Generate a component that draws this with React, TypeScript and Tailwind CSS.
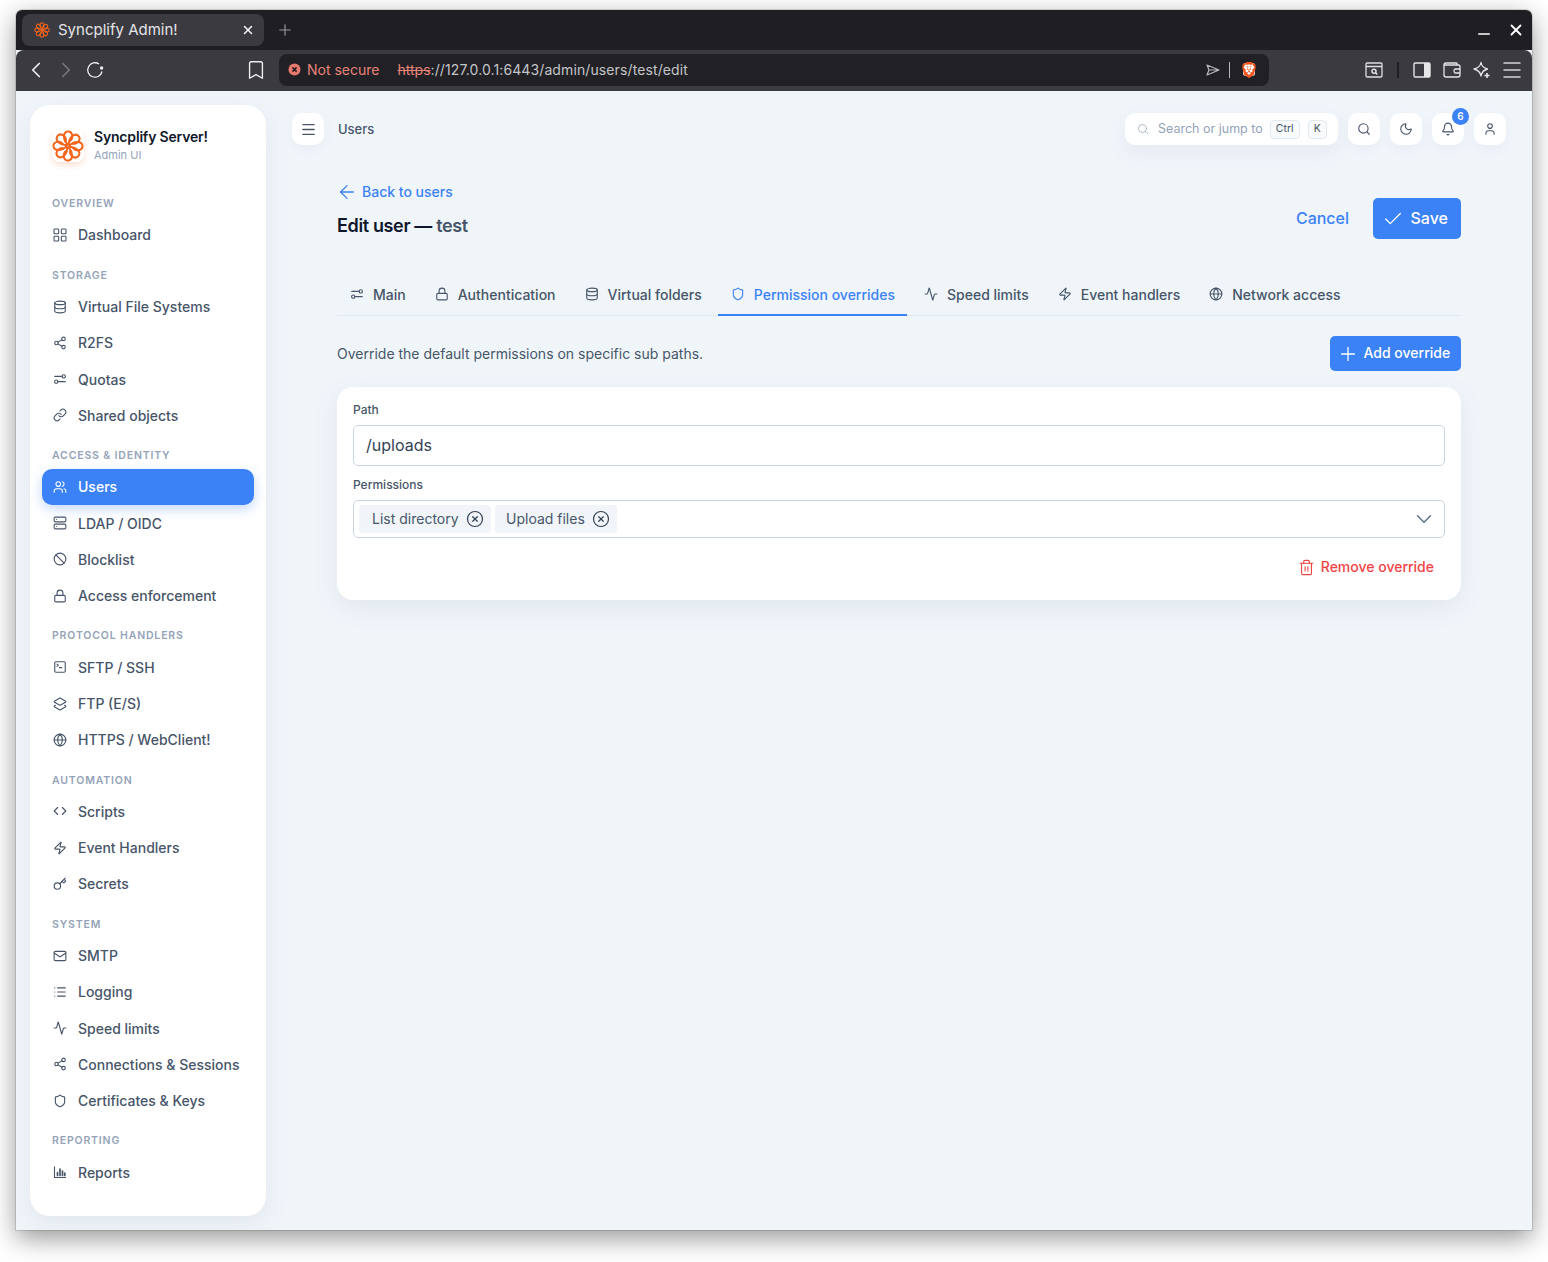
import React from "react";
import { SiBrave } from "react-icons/si";
import {
  Activity, ArrowLeft, Ban, Bell, Bookmark, Check, ChevronDown, ChevronLeft, ChevronRight, CircleX, Code, Database, Globe, Key, Layers2, LayoutGrid, Link, List, Lock, Mail, Menu, Minus, Moon, Plus, Search, Server, Share2, Shield, SquareTerminal, Trash2, User, Users, X, Zap,
} from "lucide-react";

function Flower({ size, stroke = 2 }: { size: number; stroke?: number }) {
  const angles = [0, 45, 90, 135, 180, 225, 270, 315];
  return (
    <svg width={size} height={size} viewBox="0 0 32 32" fill="none" stroke="#f4641c" strokeWidth={stroke}>
      {angles.map((a) => (
        <path key={a} transform={`rotate(${a} 16 16)`} d="M16 14.5 C11 11 10.5 2.5 15.5 1.5 C21 1 21.5 8.5 18 11" strokeLinecap="round" />
      ))}
    </svg>
  );
}

function ReportsIcon({ size }: { size: number; strokeWidth?: number }) {
  return (
    <svg width={size} height={size} viewBox="0 0 14 14" fill="none" stroke="currentColor">
      <path d="M1.5 1.5 V12.5 H13" strokeWidth="1.1" />
      <path d="M4.5 10.5 V7.5 M7 10.5 V4 M9.5 10.5 V6 M11.8 10.5 V8" strokeWidth="1.7" strokeLinecap="round" />
    </svg>
  );
}

function SlidersIcon({ size, strokeWidth = 2, className }: { size: number; strokeWidth?: number; className?: string }) {
  return (
    <svg width={size} height={size} viewBox="0 0 24 24" fill="none" stroke="currentColor" strokeWidth={strokeWidth} strokeLinecap="round" className={className}>
      <path d="M3 7.5 H15.5" />
      <circle cx="18.5" cy="7.5" r="2.8" />
      <circle cx="5.5" cy="16.5" r="2.8" />
      <path d="M8.5 16.5 H21" />
    </svg>
  );
}

function GridIcon({ size, strokeWidth }: { size: number; strokeWidth?: number }) {
  return <LayoutGrid size={size + 2} strokeWidth={(strokeWidth ?? 2) * 0.85} className="-mx-px" />;
}

const sections: { title: string; items: { label: string; icon: React.ElementType; active?: boolean }[] }[] = [
  { title: "OVERVIEW", items: [{ label: "Dashboard", icon: GridIcon }] },
  {
    title: "STORAGE",
    items: [
      { label: "Virtual File Systems", icon: Database },
      { label: "R2FS", icon: Share2 },
      { label: "Quotas", icon: SlidersIcon },
      { label: "Shared objects", icon: Link },
    ],
  },
  {
    title: "ACCESS & IDENTITY",
    items: [
      { label: "Users", icon: Users, active: true },
      { label: "LDAP / OIDC", icon: Server },
      { label: "Blocklist", icon: Ban },
      { label: "Access enforcement", icon: Lock },
    ],
  },
  {
    title: "PROTOCOL HANDLERS",
    items: [
      { label: "SFTP / SSH", icon: SquareTerminal },
      { label: "FTP (E/S)", icon: Layers2 },
      { label: "HTTPS / WebClient!", icon: Globe },
    ],
  },
  {
    title: "AUTOMATION",
    items: [
      { label: "Scripts", icon: Code },
      { label: "Event Handlers", icon: Zap },
      { label: "Secrets", icon: Key },
    ],
  },
  {
    title: "SYSTEM",
    items: [
      { label: "SMTP", icon: Mail },
      { label: "Logging", icon: List },
      { label: "Speed limits", icon: Activity },
      { label: "Connections & Sessions", icon: Share2 },
      { label: "Certificates & Keys", icon: Shield },
    ],
  },
  { title: "REPORTING", items: [{ label: "Reports", icon: ReportsIcon }] },
];

const tabs: { label: string; icon: React.ElementType; active?: boolean }[] = [
  { label: "Main", icon: SlidersIcon },
  { label: "Authentication", icon: Lock },
  { label: "Virtual folders", icon: Database },
  { label: "Permission overrides", icon: Shield, active: true },
  { label: "Speed limits", icon: Activity },
  { label: "Event handlers", icon: Zap },
  { label: "Network access", icon: Globe },
];

function BrowserChrome() {
  return (
    <>
      <div className="h-[40px] bg-[#1f1f23] flex items-center pl-[6px] pr-[6px] text-[#e4e4e7]">
        <div className="w-[242px] h-[32px] bg-[#3a3a40] rounded-[8px] flex items-center pl-[12px] pr-[9px]">
          <Flower size={16} stroke={2.2} />
          <span className="ml-[8px] text-[15px] flex-1">Syncplify Admin!</span>
          <X size={14} strokeWidth={2.6} className="text-[#f4f4f5]" />
        </div>
        <Plus size={18} strokeWidth={1.5} className="ml-[12px] text-[#9a9aa0]" />
        <div className="flex-1" />
        <Minus size={18} strokeWidth={2} className="text-white mt-[8px]" />
        <X size={18} strokeWidth={2.4} className="text-white ml-[14px] mr-px" />
      </div>
      <div className="h-[41px] pb-[2px] bg-[#3a3a40] rounded-t-[8px] flex items-center text-[#eeeeee] relative">
        <ChevronLeft size={26} strokeWidth={1.6} className="ml-[7px]" />
        <ChevronRight size={26} strokeWidth={1.6} className="ml-[4px] text-[#77777c]" />
        <svg width="18" height="18" viewBox="0 0 18 18" fill="none" stroke="currentColor" strokeWidth="1.3" className="ml-[7px]">
          <path d="M16 10.5 A7.2 7.2 0 1 1 13 3" />
          <circle cx="15.6" cy="7" r="1.7" fill="currentColor" stroke="none" />
        </svg>
        <Bookmark size={22} strokeWidth={1.5} className="ml-[141px]" />
        <div className="ml-[12px] w-[990px] h-[32px] bg-[#212125] rounded-[8px] flex items-center pl-[9px] pr-[12px] text-[14px]">
          <svg width="13" height="13" viewBox="0 0 13 13">
            <circle cx="6.5" cy="6.5" r="6" fill="#e8796f" />
            <path d="M4.4 4.4 L8.6 8.6 M8.6 4.4 L4.4 8.6" stroke="#2a1f20" strokeWidth="1.6" />
          </svg>
          <span className="ml-[6px] text-[#e8837a]">Not secure</span>
          <span className="ml-[18px] text-[#e8837a] line-through">https</span>
          <span className="text-[#c4c4c8] tracking-[0.11px]">://127.0.0.1:6443/admin/users/test/edit</span>
          <div className="flex-1" />
          <svg width="14" height="12" viewBox="0 0 14 12" fill="none" stroke="#b8b8bc" strokeWidth="1.2">
            <path d="M1 1 L13 6 L1 11 L3 6 Z M3 6 H13" strokeLinejoin="round" />
          </svg>
          <div className="ml-[9px] w-px h-[16px] bg-[#b8b8bc]" />
          <div className="ml-[11px] relative w-[16px] h-[18px] flex items-center justify-center">
            <div className="absolute left-[2px] top-[2px] w-[12px] h-[13px] bg-white rounded-[3px]" />
            <SiBrave size={18} color="#f4551e" className="relative" />
          </div>
        </div>
        <svg width="18" height="16" viewBox="0 0 18 16" fill="none" stroke="#e0e0e2" strokeWidth="1.3" className="ml-[96px]">
          <rect x="1" y="1" width="16" height="14" rx="1.2" />
          <path d="M1 4.5 H17" />
          <circle cx="9" cy="9.3" r="2" strokeWidth="1.5" />
          <path d="M10.5 10.8 L12.3 12.5" strokeWidth="1.5" />
        </svg>
        <div className="ml-[14px] w-[2px] h-[16px] bg-[#1f1f23]" />
        <svg width="18" height="16" viewBox="0 0 18 16" fill="none" className="ml-[14px]">
          <rect x="1" y="1" width="16" height="14" rx="1.2" stroke="#e6e6e8" strokeWidth="1.4" />
          <rect x="11" y="1" width="6" height="14" fill="#e6e6e8" />
        </svg>
        <svg width="18" height="16" viewBox="0 0 18 16" fill="none" stroke="#e6e6e8" strokeWidth="1.3" className="ml-[12px]">
          <path d="M14 3 V1.5 Q14 1 13 1 H3 Q1 1 1 3 V13 Q1 15 3 15 H15 Q17 15 17 13 V4.5 Q17 3 15.5 3 H1.5" />
          <path d="M17 7 H12.5 Q11 7 11 9 Q11 11 12.5 11 H17" />
        </svg>
        <svg width="18" height="18" viewBox="0 0 18 18" fill="none" stroke="#e6e6e8" strokeWidth="1.3" className="ml-[12px]">
          <path d="M8 1.5 C8.6 5 10.5 7 14.5 8 C10.5 9 8.8 10.5 8 15 C7.2 10.5 5 9 1 8 C5 7 7.4 5 8 1.5 Z" strokeLinejoin="round" />
          <path d="M14 12 V17 M11.5 14.5 H16.5" strokeWidth="1.6" />
        </svg>
        <Menu size={24} strokeWidth={1.5} className="ml-[9px] text-[#d4d4d8]" />
      </div>
    </>
  );
}

function Sidebar() {
  return (
    <aside className="w-[236px] shrink-0 h-[1111px] bg-white rounded-[20px] shadow-[0_8px_24px_rgba(100,116,139,0.1)] pl-[12px] pr-[12px]">
      <div className="h-[76.5px] flex items-start pt-[25px] pl-[10px]">
        <div className="w-[32px] h-[32px] rounded-[8px] bg-white shadow-[0_3px_6px_rgba(244,100,28,0.2)]">
          <Flower size={32} />
        </div>
        <div className="ml-[10px] -mt-[3px]">
          <div className="text-[14px] leading-[20px] font-semibold tracking-[-0.18px] text-[#0f172a]">Syncplify Server!</div>
          <div className="text-[11px] leading-[16px] text-[#94a3b8]">Admin UI</div>
        </div>
      </div>
      {sections.map((s) => (
        <div key={s.title}>
          <div className="h-[35.36px] pt-[14.6px] pl-[10px] text-[10.5px] leading-[16px] font-semibold tracking-[0.08em] text-[#94a3b8]">{s.title}</div>
          {s.items.map((it) => {
            const I = it.icon;
            return (
              <div
                key={it.label}
                className={
                  it.active
                    ? "h-[36.25px] flex items-center gap-[11px] pl-[11px] pr-[10px] rounded-[10px] bg-[#3b82f6] text-white text-[14px] font-medium shadow-[0_4px_12px_rgba(59,130,246,0.3)]"
                    : "h-[36.25px] flex items-center gap-[11px] pl-[11px] pr-[10px] text-[#475569] text-[14px] font-medium"
                }
              >
                <I size={14} strokeWidth={1.9} />
                <span>{it.label}</span>
              </div>
            );
          })}
        </div>
      ))}
    </aside>
  );
}

function IconBtn({ children }: { children: React.ReactNode }) {
  return (
    <div className="relative w-[32px] h-[32px] bg-white rounded-[10px] flex items-center justify-center text-[#475569] shadow-[0_4px_12px_rgba(100,116,139,0.06)]">
      {children}
    </div>
  );
}

function Main() {
  return (
    <main className="flex-1 min-w-0 ml-[26px]">
      <header className="h-[32px] flex items-center">
        <IconBtn>
          <Menu size={17} strokeWidth={1.8} />
        </IconBtn>
        <span className="ml-[14px] pt-[1px] text-[13px] font-medium text-[#475569]">Users</span>
        <div className="flex-1" />
        <div className="w-[213px] h-[32px] bg-white rounded-[10px] flex items-center pl-[12px] text-[12.5px] text-[#94a3b8] shadow-[0_8px_20px_rgba(100,116,139,0.08)]">
          <Search size={12} strokeWidth={1.5} />
          <span className="ml-[9px] pt-[1px]">Search or jump to</span>
          <span className="ml-[7px] h-[19px] w-[30px] flex items-center justify-center bg-[#f8fafc] border border-[#e2e8f0] rounded-[4px] text-[10.5px] text-[#475569]">Ctrl</span>
          <span className="ml-[8px] h-[19px] w-[19px] flex items-center justify-center bg-[#f8fafc] border border-[#e2e8f0] rounded-[4px] text-[10.5px] text-[#475569]">K</span>
        </div>
        <div className="ml-[10px] flex gap-[10px]">
          <IconBtn><Search size={14} strokeWidth={1.9} /></IconBtn>
          <IconBtn><Moon size={14} strokeWidth={1.9} /></IconBtn>
          <IconBtn>
            <Bell size={14} strokeWidth={1.9} />
            <span className="absolute -top-[5px] -right-[5px] w-[17px] h-[17px] rounded-full bg-[#3b82f6] text-white text-[10px] font-semibold flex items-center justify-center">6</span>
          </IconBtn>
          <IconBtn><User size={14} strokeWidth={1.9} /></IconBtn>
        </div>
      </header>

      <div className="ml-[45px] mr-[45px]">
        <div className="flex items-start justify-between mt-[37px] h-[71px]">
          <div>
            <div className="flex items-center gap-[4px] text-[14px] leading-[20px] font-medium text-[#3b82f6] -ml-px">
              <ArrowLeft size={22} strokeWidth={1.4} className="-my-[2px]" />
              <span>Back to users</span>
            </div>
            <div className="mt-[10px] text-[18px] leading-[28px] font-semibold tracking-[-0.02em] text-[#0f172a]">
              Edit user — <span className="text-[#475569]">test</span>
            </div>
          </div>
          <div className="flex items-center mt-[16px]">
            <span className="pb-[1px] text-[16px] font-medium text-[#3b82f6]">Cancel</span>
            <button className="ml-[24px] h-[41px] w-[88px] pl-[9px] pb-[1px] rounded-[5px] bg-[#3b82f6] text-white text-[16px] font-medium flex items-center gap-[6.5px]">
              <Check size={22} strokeWidth={1.4} className="mt-px" />
              <span>Save</span>
            </button>
          </div>
        </div>

        <div className="mt-[22px] h-[41px] border-b border-[#e2e8f0] flex gap-[4px]">
          {tabs.map((t) => {
            const I = t.icon;
            return (
              <div
                key={t.label}
                className={
                  t.active
                    ? "h-[41px] px-[12px] pb-[1px] flex items-center gap-[9px] text-[14px] font-medium text-[#3b82f6] border-b-2 border-[#3b82f6] -mb-px"
                    : "h-[41px] px-[12px] pb-[1px] flex items-center gap-[9px] text-[14px] font-medium text-[#475569] border-b-2 border-transparent -mb-px"
                }
              >
                <I size={14} strokeWidth={1.9} className="ml-px" />
                <span>{t.label}</span>
              </div>
            );
          })}
        </div>

        <div className="mt-[20px] h-[35px] flex items-center justify-between">
          <span className="text-[14px] text-[#475569]">Override the default permissions on specific sub paths.</span>
          <button className="h-[35px] w-[131px] pl-[7px] pb-[2px] rounded-[5px] bg-[#3b82f6] text-white text-[14px] font-medium flex items-center gap-[4.5px]">
            <Plus size={22} strokeWidth={1.4} className="mt-[2px]" />
            <span>Add override</span>
          </button>
        </div>

        <section className="mt-[16px] h-[213px] bg-white rounded-[16px] px-[16px] pt-[15px] shadow-[0_8px_24px_rgba(100,116,139,0.1)]">
          <div className="text-[12px] leading-[16px] font-medium text-[#475569]">Path</div>
          <div className="mt-[7px] h-[41px] pb-[1px] border border-[#cbd5e1] rounded-[5px] flex items-center pl-[12px] text-[16px] text-[#334155]">/uploads</div>
          <div className="mt-[11px] text-[12px] leading-[16px] font-medium text-[#475569]">Permissions</div>
          <div className="mt-[7px] h-[38px] border border-[#cbd5e1] rounded-[5px] flex items-center pl-[5px] pr-[7px] gap-[4px] text-[14px] text-[#475569]">
            <span className="h-[28px] w-[132px] pb-[1px] bg-[#f1f5f9] rounded-[4px] flex items-center pl-[13px] gap-[7px]">
              List directory <CircleX size={18} strokeWidth={1.6} className="text-[#334155] mt-px" />
            </span>
            <span className="h-[28px] w-[122px] pb-[1px] bg-[#f1f5f9] rounded-[4px] flex items-center pl-[11px] gap-[7px]">
              Upload files <CircleX size={18} strokeWidth={1.6} className="text-[#334155] mt-px" />
            </span>
            <div className="flex-1" />
            <ChevronDown size={26} strokeWidth={1.4} className="text-[#64748b]" />
          </div>
          <div className="mt-[17px] mr-[11px] flex items-center justify-end gap-[6px] text-[14px] leading-[24px] font-medium text-[#ef4444]">
            <Trash2 size={17} strokeWidth={1.6} />
            <span>Remove override</span>
          </div>
        </section>
      </div>
    </main>
  );
}

export default function App() {
  return (
    <div className="w-[1548px] h-[1262px] bg-white pt-[10px] px-[16px] overflow-hidden" style={{ fontFamily: "Inter, sans-serif" }}>
      <div className="w-[1516px] h-[1220px] rounded-t-[6px] overflow-hidden shadow-[0_8px_26px_rgba(0,0,0,0.42),0_0_0_1px_rgba(0,0,0,0.12)] bg-[#f0f5fa] flex flex-col">
        <BrowserChrome />
        <div className="flex-1 flex pt-[14px] pl-[14px] pr-[26px]">
          <Sidebar />
          <div className="flex-1 min-w-0 flex pt-[8px]">
            <Main />
          </div>
        </div>
      </div>
    </div>
  );
}
